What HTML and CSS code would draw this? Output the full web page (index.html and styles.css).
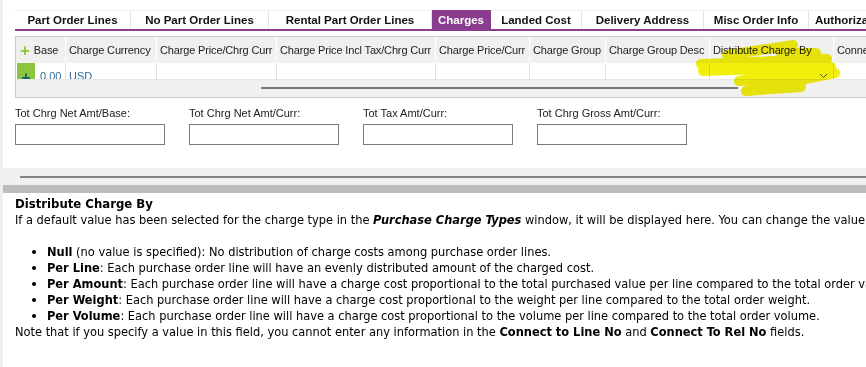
FILE: index.html
```html
<!DOCTYPE html>
<html>
<head>
<meta charset="utf-8">
<link rel="stylesheet" href="styles.css">
</head>
<body>
<div class="app">
  <div class="top-panel">
    <div class="tabs">
      <div class="tab t1">Part Order Lines</div>
      <div class="tab t2">No Part Order Lines</div>
      <div class="tab t3">Rental Part Order Lines</div>
      <div class="tab t4 active">Charges</div>
      <div class="tab t5">Landed Cost</div>
      <div class="tab t6">Delivery Address</div>
      <div class="tab t7">Misc Order Info</div>
      <div class="tab t8">Authorization</div>
    </div>
    <div class="grid">
      <div class="row head">
        <div class="cell first"><span class="plus">+</span>Base</div>
        <div class="cell">Charge Currency</div>
        <div class="cell">Charge Price/Chrg Curr</div>
        <div class="cell">Charge Price Incl Tax/Chrg Curr</div>
        <div class="cell">Charge Price/Curr</div>
        <div class="cell">Charge Group</div>
        <div class="cell">Charge Group Desc</div>
        <div class="cell">Distribute Charge By</div>
        <div class="cell">Connect To Line No</div>
      </div>
      <div class="row data">
        <div class="cell first"><span class="add">+</span><span class="val">0.00</span></div>
        <div class="cell"><span class="val">USD</span></div>
        <div class="cell"></div>
        <div class="cell"></div>
        <div class="cell"></div>
        <div class="cell"></div>
        <div class="cell"></div>
        <div class="cell combo"><svg class="chev" width="9" height="6" viewBox="0 0 9 6"><path d="M1 1 L4.5 4.5 L8 1" fill="none" stroke="#555" stroke-width="1"/></svg></div>
        <div class="cell"></div>
      </div>
      <div class="hscroll"><div class="thumb"></div></div>
      <svg class="highlight" width="180" height="70" viewBox="690 35 180 70">
        <path d="M726 54 L792 44 L780 52 L815 52 M700 63 L826 58 L702 70 L830 66 L738 80 L834 72 L745 90 L800 86" fill="none" stroke="#f3ef00" stroke-width="10" stroke-linecap="round" stroke-linejoin="round"/>
      </svg>
    </div>
    <div class="totals">
      <div class="field"><label>Tot Chrg Net Amt/Base:</label><div class="input"></div></div>
      <div class="field"><label>Tot Chrg Net Amt/Curr:</label><div class="input"></div></div>
      <div class="field"><label>Tot Tax Amt/Curr:</label><div class="input"></div></div>
      <div class="field"><label>Tot Chrg Gross Amt/Curr:</label><div class="input"></div></div>
    </div>
  </div>
  <div class="splitter"><div class="split-line"></div></div>
  <div class="split-bar"></div>
  <div class="help">
    <div class="help-title">Distribute Charge By</div>
    <p class="help-p">If a default value has been selected for the charge type in the <b><i>Purchase Charge Types</i></b> window, it will be displayed here. You can change the value if necessary.</p>
    <ul class="help-list">
      <li><b>Null</b> (no value is specified): No distribution of charge costs among purchase order lines.</li>
      <li><b>Per Line</b>: Each purchase order line will have an evenly distributed amount of the charged cost.</li>
      <li><b>Per Amount</b>: Each purchase order line will have a charge cost proportional to the total purchased value per line compared to the total order value.</li>
      <li><b>Per Weight</b>: Each purchase order line will have a charge cost proportional to the weight per line compared to the total order weight.</li>
      <li><b>Per Volume</b>: Each purchase order line will have a charge cost proportional to the volume per line compared to the total order volume.</li>
    </ul>
    <div class="help-note">Note that if you specify a value in this field, you cannot enter any information in the <b>Connect to Line No</b> and <b>Connect To Rel No</b> fields.</div>
  </div>
</div>
</body>
</html>
```

FILE: styles.css
```css
html, body {
  margin: 0;
  padding: 0;
  background: #efefef;
  overflow: hidden;
}
.app {
  width: 866px;
  height: 367px;
  padding-left: 3px;
  box-sizing: border-box;
  overflow: hidden;
  font-family: "Liberation Sans", Arial, sans-serif;
}
.top-panel {
  background: #fff;
  height: 168px;
  padding: 10px 0 0 12px;
  box-sizing: border-box;
  overflow: hidden;
}
.tabs {
  display: flex;
  height: 19px;
  border-bottom: 2px solid #8a3d8e;
  white-space: nowrap;
}
.tab {
  flex: none;
  font-weight: bold;
  font-size: 11.5px;
  line-height: 19px;
  text-align: center;
  color: #111;
  border-right: 1px solid #e4e4e4;
  border-top: 1px solid #eee;
  box-sizing: border-box;
}
.t1 { width: 116px; }
.t2 { width: 138px; }
.t3 { width: 163px; }
.t4 { width: 59px; }
.t5 { width: 91px; }
.t6 { width: 122px; }
.t7 { width: 105px; }
.t8 { width: 80px; text-align: left; padding-left: 6px; border-right: none; }
.tab.active {
  background: #8a3d8e;
  color: #fff;
  border-color: #8a3d8e;
}
.grid {
  position: relative;
  margin-top: 5px;
  border: 1px solid #c9c9c9;
  border-right: none;
  width: 900px;
}
.row {
  display: grid;
  grid-template-columns: 50px 91px 120px 159px 94px 76px 104px 124px 1fr;
}
.head {
  height: 26px;
  background: #f0f0f0;
}
.head .cell {
  font-size: 11px;
  letter-spacing: -0.15px;
  line-height: 26px;
  color: #222;
  padding-left: 3px;
  border-right: 1px solid #fff;
  white-space: nowrap;
  overflow: hidden;
}
.head .cell.first { padding-left: 4px; }
.plus {
  color: #8cc63f;
  font-size: 17px;
  font-weight: bold;
  margin-right: 4px;
  vertical-align: -2px;
}
.data {
  height: 16px;
  overflow: hidden;
  background: #fff;
}
.data .cell {
  height: 16px;
  border-right: 1px solid #e2e2e2;
  font-size: 11px;
  line-height: 26px;
  color: #2d6a9a;
  overflow: hidden;
  position: relative;
  padding-left: 3px;
}
.data .cell.first { padding-left: 1px; display: flex; }
.add {
  display: inline-block;
  width: 18px;
  height: 26px;
  background: #8cc63f;
  color: #1a5d6a;
  font-weight: bold;
  font-size: 16px;
  line-height: 30px;
  text-align: center;
  margin-right: 5px;
}
.val { white-space: nowrap; }
.combo .chev {
  position: absolute;
  right: 5px;
  top: 10px;
}
.hscroll {
  height: 17px;
  background: #f0f0f0;
  border-top: 1px solid #e6e6e6;
  position: relative;
}
.thumb {
  position: absolute;
  left: 245px;
  width: 477px;
  top: 7px;
  height: 2px;
  background: #7a7a7a;
}
.highlight {
  position: absolute;
  left: 675px;
  top: -1px;
  mix-blend-mode: multiply;
  opacity: 0.95;
}
.totals {
  display: flex;
  gap: 24px;
  margin-top: 9px;
}
.field label {
  display: block;
  font-size: 11px;
  color: #222;
  height: 17px;
  line-height: 12px;
}
.field .input {
  width: 150px;
  height: 21px;
  border: 1px solid #7a7a7a;
  box-sizing: border-box;
  background: #fff;
}
.splitter {
  height: 17px;
  background: #f0f0f0;
  padding: 8px 0 0 17px;
  box-sizing: border-box;
}
.split-line {
  height: 2px;
  background: #838383;
}
.split-bar {
  height: 8px;
  background: #bcbcbc;
}
.help {
  background: #fff;
  height: 200px;
  padding: 3px 0 0 12px;
  font-family: "DejaVu Sans Condensed", "DejaVu Sans", Tahoma, sans-serif;
  font-size: 12.7px;
  line-height: 16px;
  color: #000;
  white-space: nowrap;
}
.help-title {
  font-weight: bold;
  font-size: 13px;
}
.help-p {
  margin: 0 0 16px 0;
}
.help-list {
  margin: 0;
  padding-left: 32px;
}
.help-note {
  margin: 0;
}
```
